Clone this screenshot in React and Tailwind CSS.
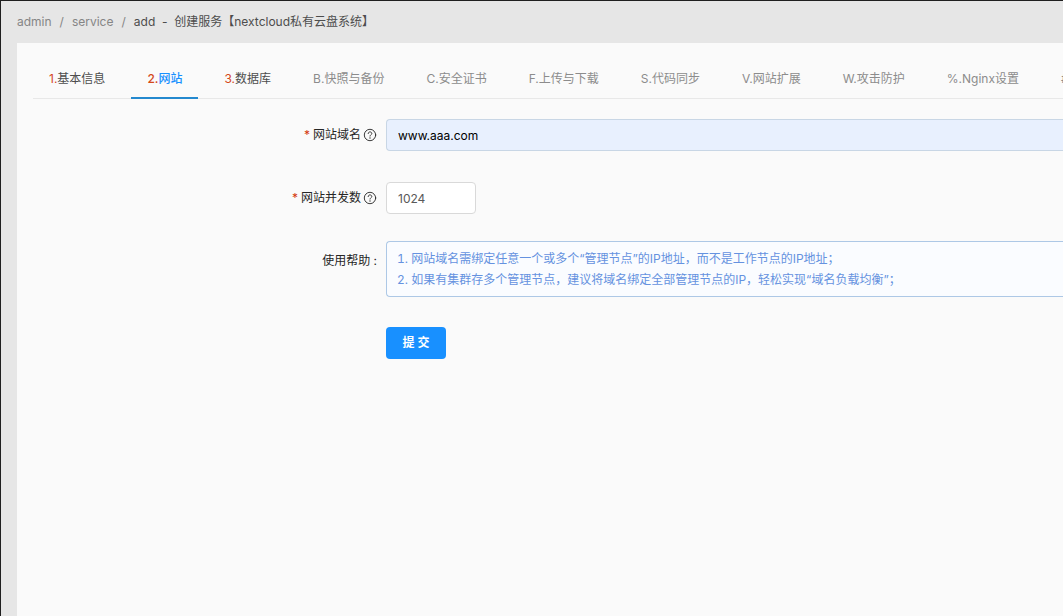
import { useState } from "react";
import clsx from "clsx";

const TABS = [
  { key: "1", label: "基本信息", required: true },
  { key: "2", label: "网站", required: true },
  { key: "3", label: "数据库", required: true },
  { key: "B", label: "快照与备份" },
  { key: "C", label: "安全证书" },
  { key: "F", label: "上传与下载" },
  { key: "S", label: "代码同步" },
  { key: "V", label: "网站扩展" },
  { key: "W", label: "攻击防护" },
  { key: "%", label: "Nginx设置" },
  { key: "#", label: "" },
];

const HELP_LINES = [
  "1. 网站域名需绑定任意一个或多个“管理节点”的IP地址，而不是工作节点的IP地址；",
  "2. 如果有集群存多个管理节点，建议将域名绑定全部管理节点的IP，轻松实现“域名负载均衡”；",
];

function HelpIcon() {
  return (
    <svg
      viewBox="0 0 14 14"
      className="ml-0.5 size-3.5 shrink-0"
      fill="none"
      stroke="currentColor"
      strokeWidth=".9"
      strokeLinecap="round"
      strokeLinejoin="round"
      aria-hidden="true"
    >
      <circle cx="7" cy="7" r="5.7" />
      <path d="M5.2 5.6c0-1 .8-1.7 1.8-1.7s1.8.7 1.8 1.6c0 1.2-1.8 1.3-1.8 2.6" />
      <circle cx="7" cy="10" r=".65" fill="currentColor" stroke="none" />
    </svg>
  );
}

function FormRow({ label, htmlFor, required, help, labelClass, children }) {
  const Label = htmlFor ? "label" : "div";
  return (
    <div className="flex items-start">
      <Label
        htmlFor={htmlFor}
        className={clsx(
          "flex h-8 w-[353px] shrink-0 items-center justify-end pr-[9px] text-[#262626]",
          labelClass
        )}
      >
        {required && <span className="mr-[3px] text-[#d4380d]">*</span>}
        {label}
        {help && <HelpIcon />}
      </Label>
      <div className="min-w-0 flex-1">{children}</div>
    </div>
  );
}

function Tabs({ active, onChange }) {
  return (
    <div role="tablist" className="flex gap-2.5 overflow-hidden shadow-[inset_0_-1px_0_#e8e8e8]">
      {TABS.map((tab) => {
        const selected = tab.key === active;
        return (
          <button
            key={tab.key}
            type="button"
            role="tab"
            aria-selected={selected}
            onClick={() => onChange(tab.key)}
            className={clsx(
              "h-10 shrink-0 border-b-2 px-4 pt-0.5 whitespace-nowrap",
              selected
                ? "border-[#2489cf] font-medium text-[#1890ff]"
                : "border-transparent",
              !selected && (tab.required ? "text-[#4d4d4d]" : "text-[#8c8c8c]")
            )}
          >
            <span className={tab.required ? "text-[#d4481a]" : undefined}>{tab.key}.</span>
            {tab.label}
          </button>
        );
      })}
    </div>
  );
}

export default function App() {
  const [active, setActive] = useState("2");
  const [domain, setDomain] = useState("www.aaa.com");
  const [limit, setLimit] = useState("1024");

  return (
    <div className="flex min-h-screen flex-col overflow-hidden border-t border-l border-[#1f1f1f] bg-[#e6e6e6] pl-4 font-['Inter','Noto_Sans_CJK_SC',sans-serif] text-xs">
      <nav className="flex h-[42px] items-center gap-2 text-[#858585]">
        <a href="#admin">admin</a>
        <span>/</span>
        <a href="#service">service</a>
        <span>/</span>
        <span className="text-[#4d4d4d]">add&nbsp; -&nbsp; 创建服务【nextcloud私有云盘系统】</span>
      </nav>

      <main className="flex-1 bg-[#fafafa] pt-4 pl-4">
        <Tabs active={active} onChange={setActive} />

        <form className="pt-5" onSubmit={(e) => e.preventDefault()}>
          <div className="flex flex-col gap-[31px]">
            <FormRow label="网站域名" htmlFor="domain" required help>
              <input
                id="domain"
                value={domain}
                onChange={(e) => setDomain(e.target.value)}
                className="block h-8 w-full rounded-l-sm border border-r-0 border-[#c8d6e5] bg-[#e8f0fe] px-[11px] text-black outline-none"
              />
            </FormRow>

            <FormRow label="网站并发数" htmlFor="limit" required help>
              <input
                id="limit"
                value={limit}
                onChange={(e) => setLimit(e.target.value)}
                className="block h-8 w-[90px] rounded-sm border border-[#d9d9d9] bg-white px-[11px] text-[#595959] outline-none"
              />
            </FormRow>
          </div>

          <div className="flex flex-col gap-[30px] pt-[27px]">
            <FormRow label="使用帮助 :" labelClass="mt-1">
              <div className="rounded-l-sm border border-r-0 border-[#adc8e6] bg-[#fafcff] px-2.5 py-1.5 leading-[21px] whitespace-nowrap text-[#6592e0] tabular-nums">
                {HELP_LINES.map((line) => (
                  <p key={line}>{line}</p>
                ))}
              </div>
            </FormRow>

            <div className="pl-[353px]">
              <button
                type="submit"
                className="flex h-8 w-[60px] items-center justify-center rounded-sm bg-[#1890ff] font-bold text-white"
              >
                提 交
              </button>
            </div>
          </div>
        </form>
      </main>
    </div>
  );
}
